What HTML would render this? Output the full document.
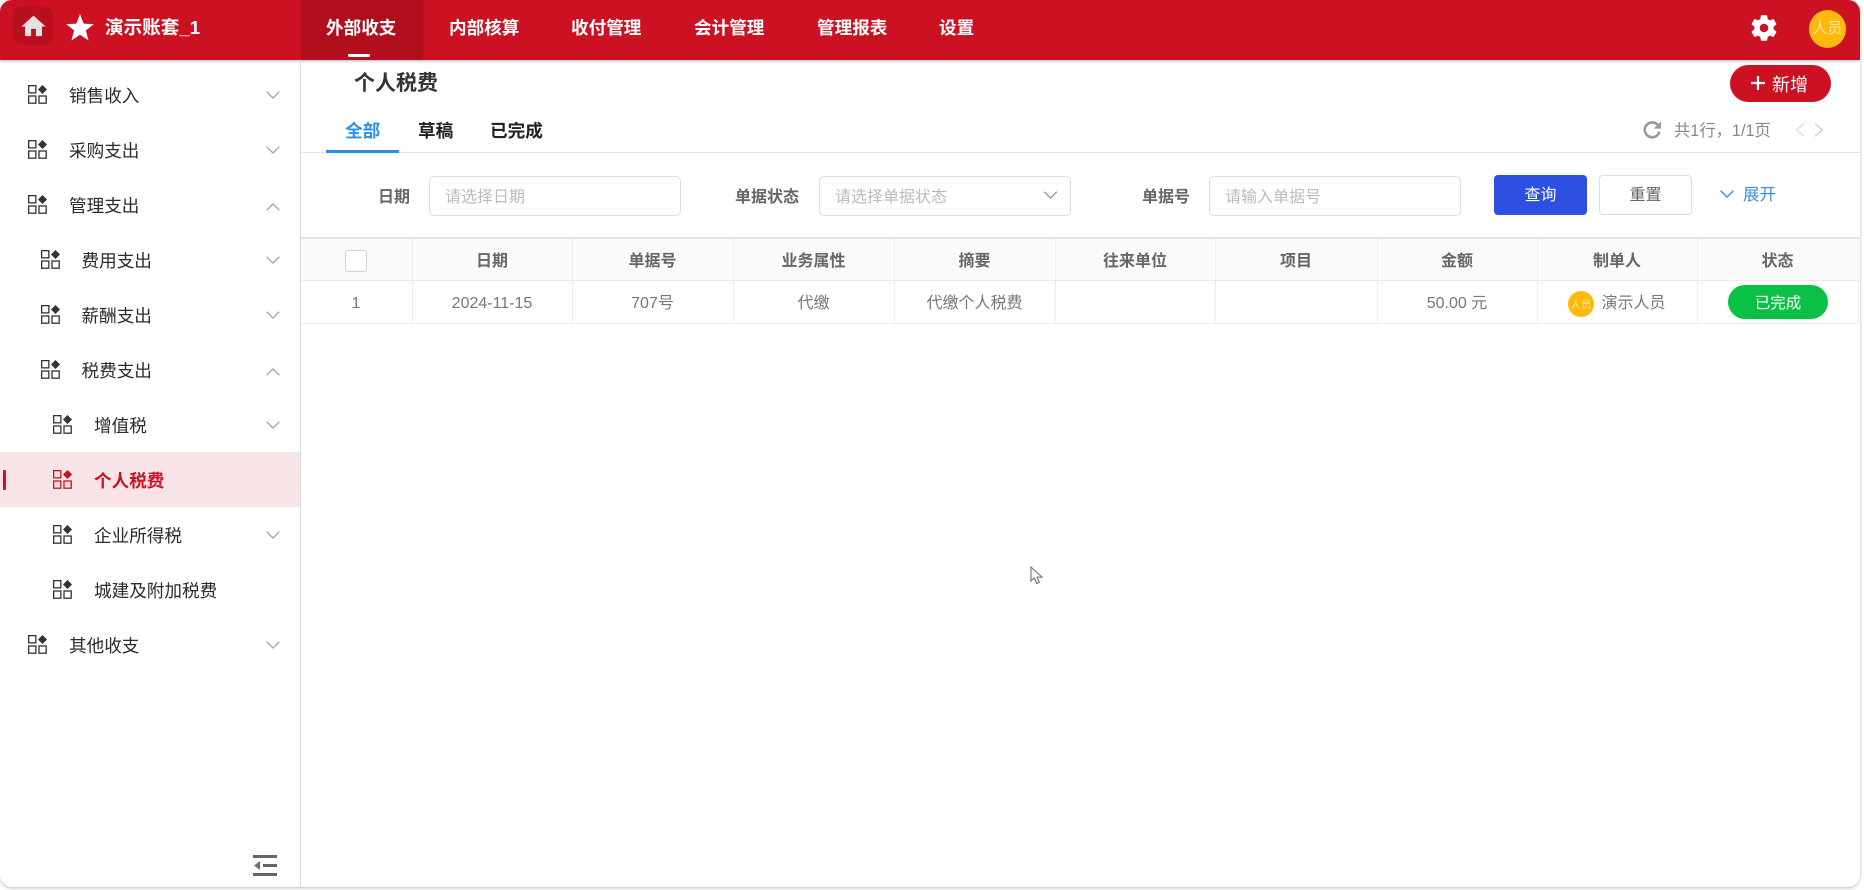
<!DOCTYPE html>
<html lang="zh-CN">
<head>
<meta charset="utf-8">
<title>个人税费</title>
<style>
*{box-sizing:border-box;margin:0;padding:0}
html,body{width:1864px;height:890px;overflow:hidden;background:#fff}
body{font-family:"Liberation Sans","Noto Sans CJK SC",sans-serif;color:#333;position:relative}
#app{position:absolute;left:0;top:0;width:1860px;height:887px;background:#fff;border-radius:12px;box-shadow:0 1px 3px rgba(0,0,0,.28);overflow:hidden}
.a{position:absolute}
.t{position:absolute;white-space:nowrap;line-height:24px;height:24px;transform:translateY(1px)}
#hd .t{transform:none}
.c{text-align:center}
#hd{left:0;top:0;width:1860px;height:60px;background:#cb1122;box-shadow:0 1px 3px rgba(0,0,0,.3)}
.nav{font-size:17.6px;font-weight:700;color:#fff;top:16px}
.m{font-size:17.6px;color:#2b2b2b}
.lbl{font-size:16px;font-weight:700;color:#666}
.ph{font-size:16px;color:#bbb}
.box{position:absolute;background:#fff;border:1px solid #ddd;border-radius:5px;height:40px;top:176px}
.th{font-size:16px;font-weight:700;color:#666;top:249px}
.td{font-size:16px;color:#777;top:291px}
.vl{position:absolute;width:1px;background:#eee;top:238px;height:85px}
svg{position:absolute;display:block;overflow:visible}
</style>
</head>
<body>
<svg width="0" height="0" style="position:absolute">
<symbol id="ic" viewBox="0 0 19 19">
<rect x=".65" y=".65" width="7.2" height="7.2" fill="none" stroke="currentColor" stroke-width="1.3"/>
<rect x=".65" y="11" width="7.2" height="7.2" fill="none" stroke="currentColor" stroke-width="1.3"/>
<rect x="11" y="11" width="7.2" height="7.2" fill="none" stroke="currentColor" stroke-width="1.3"/>
<path d="M14.5 0 19 4.5 14.5 9 10 4.5Z" fill="currentColor"/>
</symbol>
<symbol id="dn" viewBox="0 0 14 8"><path d="M.7.8 7 7 13.3.8" fill="none" stroke="currentColor" stroke-width="1.4"/></symbol>
<symbol id="up" viewBox="0 0 14 8"><path d="M.7 7.2 7 1l6.3 6.2" fill="none" stroke="currentColor" stroke-width="1.4"/></symbol>
</svg>

<div id="app">
<div id="hd" class="a">
  <div class="a" style="left:13px;top:6px;width:40px;height:39px;background:#b9101f;border-radius:9px"></div>
  <svg style="left:18.5px;top:12px" width="29" height="29" viewBox="0 0 24 24"><path fill="#e6e0e0" d="M10 20v-6h4v6h5v-8h3L12 3 2 12h3v8z"/></svg>
  <svg style="left:66px;top:14px" width="28" height="28" viewBox="0 0 28 28"><path fill="#fff" d="M14 0l3.6 9.6 10.2.5-8 6.4 2.8 10L14 20.8 5.4 26.5l2.8-10-8-6.4 10.2-.5z"/></svg>
  <div class="t" style="left:105px;top:15.5px;font-size:18.6px;font-weight:700;color:#fff">演示账套_1</div>
  <div class="a" style="left:301px;top:0;width:122px;height:60px;background:#b10f1e"></div>
  <div class="a" style="left:348px;top:54px;width:22px;height:3px;background:#fff;border-radius:2px"></div>
  <div class="t nav" style="left:326px">外部收支</div>
  <div class="t nav" style="left:449px">内部核算</div>
  <div class="t nav" style="left:571px">收付管理</div>
  <div class="t nav" style="left:694px">会计管理</div>
  <div class="t nav" style="left:817px">管理报表</div>
  <div class="t nav" style="left:939px">设置</div>
  <svg style="left:1747.5px;top:12px" width="32" height="32" viewBox="0 0 24 24"><path fill="#fff" d="M19.14 12.94c.04-.3.06-.61.06-.94 0-.32-.02-.64-.07-.94l2.03-1.58c.18-.14.23-.41.12-.61l-1.92-3.32c-.12-.22-.37-.29-.59-.22l-2.39.96c-.5-.38-1.03-.7-1.62-.94l-.36-2.54c-.04-.24-.24-.41-.48-.41h-3.84c-.24 0-.43.17-.47.41l-.36 2.54c-.59.24-1.13.57-1.62.94l-2.39-.96c-.22-.08-.47 0-.59.22L2.74 8.87c-.12.21-.08.47.12.61l2.03 1.58c-.05.3-.09.63-.09.94s.02.64.07.94l-2.03 1.58c-.18.14-.23.41-.12.61l1.92 3.32c.12.22.37.29.59.22l2.39-.96c.5.38 1.03.7 1.62.94l.36 2.54c.05.24.24.41.48.41h3.84c.24 0 .44-.17.47-.41l.36-2.54c.59-.24 1.13-.56 1.62-.94l2.39.96c.22.08.47 0 .59-.22l1.92-3.32c.12-.22.07-.47-.12-.61l-2.01-1.58zM12 15.2c-1.77 0-3.2-1.43-3.2-3.2s1.43-3.2 3.2-3.2 3.2 1.43 3.2 3.2-1.43 3.2-3.2 3.2z"/></svg>
  <div class="a" style="left:1809px;top:10px;width:37px;height:38px;border-radius:50%;background:#fdb90d"></div>
  <div class="t c" style="left:1809px;top:17px;width:37px;font-size:15px;color:#ffe79a">人员</div>
</div>

<!-- Sidebar -->
<div class="a" style="left:300px;top:60px;width:1px;height:827px;background:#dcdcdc"></div>
<div class="a" style="left:0;top:452px;width:300px;height:55px;background:#f8e4e6"></div>
<div class="a" style="left:3px;top:470px;width:3px;height:20px;background:#cb1122;border-radius:1px"></div>

<svg style="left:28px;top:85px;color:#333" width="19" height="19"><use href="#ic"/></svg>
<div class="t m" style="left:69px;top:83px">销售收入</div>
<svg style="left:266px;top:91px;color:#aaa" width="14" height="8"><use href="#dn"/></svg>

<svg style="left:28px;top:140px;color:#333" width="19" height="19"><use href="#ic"/></svg>
<div class="t m" style="left:69px;top:138px">采购支出</div>
<svg style="left:266px;top:146px;color:#aaa" width="14" height="8"><use href="#dn"/></svg>

<svg style="left:28px;top:195px;color:#333" width="19" height="19"><use href="#ic"/></svg>
<div class="t m" style="left:69px;top:193px">管理支出</div>
<svg style="left:266px;top:203px;color:#aaa" width="14" height="8"><use href="#up"/></svg>

<svg style="left:41px;top:250px;color:#333" width="19" height="19"><use href="#ic"/></svg>
<div class="t m" style="left:81.5px;top:248px">费用支出</div>
<svg style="left:266px;top:256px;color:#aaa" width="14" height="8"><use href="#dn"/></svg>

<svg style="left:41px;top:305px;color:#333" width="19" height="19"><use href="#ic"/></svg>
<div class="t m" style="left:81.5px;top:303px">薪酬支出</div>
<svg style="left:266px;top:311px;color:#aaa" width="14" height="8"><use href="#dn"/></svg>

<svg style="left:41px;top:360px;color:#333" width="19" height="19"><use href="#ic"/></svg>
<div class="t m" style="left:81.5px;top:358px">税费支出</div>
<svg style="left:266px;top:368px;color:#aaa" width="14" height="8"><use href="#up"/></svg>

<svg style="left:53px;top:415px;color:#333" width="19" height="19"><use href="#ic"/></svg>
<div class="t m" style="left:94px;top:413px">增值税</div>
<svg style="left:266px;top:421px;color:#aaa" width="14" height="8"><use href="#dn"/></svg>

<svg style="left:53px;top:470px;color:#cb1122" width="19" height="19"><use href="#ic"/></svg>
<div class="t m" style="left:94px;top:468px;color:#cb1122;font-weight:700">个人税费</div>

<svg style="left:53px;top:525px;color:#333" width="19" height="19"><use href="#ic"/></svg>
<div class="t m" style="left:94px;top:523px">企业所得税</div>
<svg style="left:266px;top:531px;color:#aaa" width="14" height="8"><use href="#dn"/></svg>

<svg style="left:53px;top:580px;color:#333" width="19" height="19"><use href="#ic"/></svg>
<div class="t m" style="left:94px;top:578px">城建及附加税费</div>

<svg style="left:28px;top:635px;color:#333" width="19" height="19"><use href="#ic"/></svg>
<div class="t m" style="left:69px;top:632.5px">其他收支</div>
<svg style="left:266px;top:641px;color:#aaa" width="14" height="8"><use href="#dn"/></svg>

<div class="a" style="left:253px;top:855px;width:24px;height:2.5px;background:#666"></div>
<div class="a" style="left:263px;top:864px;width:14px;height:2.5px;background:#666"></div>
<div class="a" style="left:253px;top:873px;width:24px;height:2.5px;background:#666"></div>
<svg style="left:254px;top:861px" width="6" height="9" viewBox="0 0 6 9"><path d="M6 0v9L0 4.5z" fill="#5d7488"/></svg>

<!-- Title bar -->
<div class="t" style="left:354px;top:71px;font-size:21px;font-weight:700;color:#333">个人税费</div>
<div class="a" style="left:1730px;top:65px;width:101px;height:37px;border-radius:19px;background:#cb1122"></div>
<svg style="left:1751px;top:76px" width="14" height="14" viewBox="0 0 14 14"><path d="M7 0v14M0 7h14" stroke="#fff" stroke-width="2.2"/></svg>
<div class="t" style="left:1772px;top:72px;font-size:18px;color:#fff">新增</div>

<!-- Tabs -->
<div class="a" style="left:301px;top:152px;width:1559px;height:1px;background:#e2e2e2"></div>
<div class="a" style="left:326px;top:150px;width:73px;height:3px;background:#2b8fe8"></div>
<div class="t" style="left:345px;top:118px;font-size:17.6px;font-weight:700;color:#2b8fe8">全部</div>
<div class="t" style="left:418px;top:118px;font-size:17.6px;font-weight:700;color:#222">草稿</div>
<div class="t" style="left:490px;top:118px;font-size:17.6px;font-weight:700;color:#222">已完成</div>

<svg style="left:1643px;top:121px" width="18" height="18" viewBox="0 0 18 18"><path d="M14.6 3.8A7.4 7.4 0 1 0 16.4 10.6" fill="none" stroke="#999" stroke-width="2.6"/><path d="M18 .4V7.6H10.8z" fill="#999"/></svg>
<div class="t" style="left:1674px;top:118px;font-size:16.3px;color:#888">共1行，1/1页</div>
<svg style="left:1795px;top:123px" width="10" height="14" viewBox="0 0 10 14"><path d="M9 .7 1.5 7 9 13.3" fill="none" stroke="#ddd" stroke-width="1.3"/></svg>
<svg style="left:1814px;top:123px" width="10" height="14" viewBox="0 0 10 14"><path d="M1 .7 8.5 7 1 13.3" fill="none" stroke="#ccc" stroke-width="1.3"/></svg>

<!-- Filters -->
<div class="t lbl" style="left:378px;top:185px">日期</div>
<div class="box" style="left:429px;width:252px"></div>
<div class="t ph" style="left:445px;top:185px">请选择日期</div>

<div class="t lbl" style="left:735px;top:185px">单据状态</div>
<div class="box" style="left:819px;width:252px"></div>
<div class="t ph" style="left:835px;top:185px">请选择单据状态</div>
<svg style="left:1043px;top:191px;color:#999" width="15" height="8"><use href="#dn"/></svg>

<div class="t lbl" style="left:1142px;top:185px">单据号</div>
<div class="box" style="left:1209px;width:252px"></div>
<div class="t ph" style="left:1225px;top:185px">请输入单据号</div>

<div class="a" style="left:1494px;top:175px;width:93px;height:40px;background:#2e50e2;border-radius:4px"></div>
<div class="t c" style="left:1494px;top:183px;width:93px;font-size:16px;color:#fff">查询</div>
<div class="a" style="left:1599px;top:175px;width:93px;height:40px;background:#fff;border:1px solid #ddd;border-radius:4px"></div>
<div class="t c" style="left:1599px;top:183px;width:93px;font-size:16px;color:#666">重置</div>
<svg style="left:1719px;top:190px;color:#3d8fd8" width="16" height="8"><use href="#dn"/></svg>
<div class="t" style="left:1743px;top:182px;font-size:16.5px;color:#3d8fd8">展开</div>

<!-- Table -->
<div class="a" style="left:301px;top:237px;width:1559px;height:2px;background:#e4e4e4"></div>
<div class="a" style="left:301px;top:239px;width:1558px;height:41px;background:#fafafa"></div>
<div class="a" style="left:301px;top:280px;width:1558px;height:1px;background:#eaeaea"></div>
<div class="a" style="left:301px;top:323px;width:1558px;height:1px;background:#eaeaea"></div>
<div class="vl" style="left:412px"></div>
<div class="vl" style="left:572px"></div>
<div class="vl" style="left:733px"></div>
<div class="vl" style="left:894px"></div>
<div class="vl" style="left:1055px"></div>
<div class="vl" style="left:1215px"></div>
<div class="vl" style="left:1377px"></div>
<div class="vl" style="left:1537px"></div>
<div class="vl" style="left:1697px"></div>
<div class="vl" style="left:1858px"></div>

<div class="a" style="left:345px;top:250px;width:22px;height:22px;background:#fff;border:1px solid #d0d0d0;border-radius:3px"></div>

<div class="t c th" style="left:412px;width:160px">日期</div>
<div class="t c th" style="left:572px;width:161px">单据号</div>
<div class="t c th" style="left:733px;width:161px">业务属性</div>
<div class="t c th" style="left:894px;width:161px">摘要</div>
<div class="t c th" style="left:1055px;width:160px">往来单位</div>
<div class="t c th" style="left:1215px;width:162px">项目</div>
<div class="t c th" style="left:1377px;width:160px">金额</div>
<div class="t c th" style="left:1537px;width:160px">制单人</div>
<div class="t c th" style="left:1697px;width:161px">状态</div>

<div class="t c td" style="left:301px;width:110px">1</div>
<div class="t c td" style="left:412px;width:160px">2024-11-15</div>
<div class="t c td" style="left:572px;width:161px">707号</div>
<div class="t c td" style="left:733px;width:161px">代缴</div>
<div class="t c td" style="left:894px;width:161px">代缴个人税费</div>
<div class="t c td" style="left:1377px;width:160px">50.00 元</div>
<div class="a" style="left:1568px;top:291px;width:26px;height:26px;border-radius:50%;background:#fdb90d"></div>
<div class="t c" style="left:1568px;top:292px;width:26px;font-size:10.5px;color:#ffe79a">人员</div>
<div class="t td" style="left:1601.5px">演示人员</div>
<div class="a" style="left:1728px;top:285px;width:100px;height:34px;border-radius:17px;background:#0ac146"></div>
<div class="t c" style="left:1728px;top:291px;width:100px;font-size:15.5px;color:#fff">已完成</div>

<!-- Cursor -->
<svg style="left:1030px;top:566px" width="14" height="19" viewBox="0 0 14 19"><path d="M1 1v14l3.4-3 2.3 5.6 2.6-1.1-2.3-5.4H12z" fill="#fff" stroke="#666" stroke-width="1"/></svg>
</div>
</body>
</html>
